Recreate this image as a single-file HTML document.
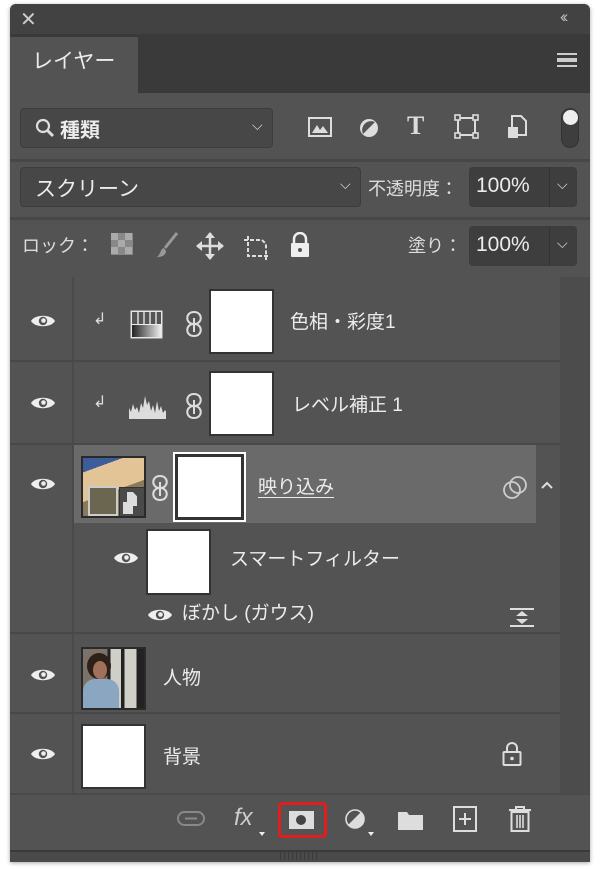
<!DOCTYPE html>
<html><head><meta charset="utf-8"><style>
*{margin:0;padding:0;box-sizing:border-box}
body{width:600px;height:876px;background:#fff;position:relative;overflow:hidden;font-family:"Liberation Sans","Noto Sans CJK JP",sans-serif;color:#e6e6e6}
.a{position:absolute}
.panel{left:10px;top:4px;width:580px;height:858px;background:#535353;border-radius:6px 6px 0 0;overflow:hidden;box-shadow:0 1px 4px rgba(0,0,0,.35)}
.box{position:absolute;background:#474747;border:1px solid #3c3c3c;border-radius:4px}
.t{position:absolute;white-space:nowrap;font-size:19px;color:#ececec}
.sep{position:absolute;left:0;width:550px;height:2px;background:#484848}
.wh{position:absolute;background:#fff;border:2px solid #333}
.eye{position:absolute;width:26px;height:16px}
</style></head><body>
<div class="a panel">
 <div class="a" style="left:0;top:0;width:580px;height:30px;background:#424242"></div>
 <div class="t" style="left:10px;top:3px;font-size:20px;color:#ccc">✕</div>
 <div class="t" style="left:550px;top:3px;font-size:17px;color:#bbb;letter-spacing:-3px">‹‹</div>
 <div class="a" style="left:0;top:30px;width:580px;height:59px;background:#3a3a3a"></div>
 <div class="a" style="left:0;top:33px;width:128px;height:56px;background:#535353"></div>
 <div class="t" style="left:22px;top:41px;font-size:21px">レイヤー</div>
 <div class="a" style="left:547px;top:49px;width:20px;height:14px;border-top:2px solid #ccc;border-bottom:2px solid #ccc"></div>
 <div class="a" style="left:547px;top:54px;width:20px;height:4px;border-top:2px solid #ccc;border-bottom:2px solid #ccc"></div>
 <div class="box" style="left:10px;top:104px;width:253px;height:40px"></div>
 <svg class="a" style="left:25px;top:114px" width="22" height="22"><circle cx="8" cy="8" r="6" fill="none" stroke="#ddd" stroke-width="2.2"/><path d="M12 12l6 6" stroke="#ddd" stroke-width="3"/></svg>
 <div class="t" style="left:50px;top:110px;font-size:20px;font-weight:bold">種類</div>
 <div class="t" style="left:242px;top:113px;font-size:14px;color:#ddd">⌵</div>
 <svg class="a" style="left:298px;top:112px" width="26" height="24"><rect x="1" y="2" width="22" height="18" fill="none" stroke="#ddd" stroke-width="2"/><path d="M4 17l5-8 3 5 3-4 5 7z" fill="#ddd"/></svg>
 <svg class="a" style="left:348px;top:112px" width="24" height="24"><circle cx="11" cy="12" r="9" fill="#ddd"/><path d="M17 6A9 9 0 0 1 5 18z" fill="#535353" transform="rotate(180 11 12)"/></svg>
 <div class="t" style="left:397px;top:107px;font-size:26px;font-family:'Liberation Serif',serif;font-weight:bold;color:#ddd">T</div>
 <svg class="a" style="left:444px;top:110px" width="26" height="26"><rect x="4" y="4" width="17" height="17" fill="none" stroke="#ddd" stroke-width="2"/><g fill="#535353" stroke="#ddd" stroke-width="1.6"><rect x="1" y="1" width="5" height="5"/><rect x="19" y="1" width="5" height="5"/><rect x="1" y="19" width="5" height="5"/><rect x="19" y="19" width="5" height="5"/></g></svg>
 <svg class="a" style="left:495px;top:110px" width="24" height="26"><path d="M7 2h9l5 5v14h-14z" fill="none" stroke="#ddd" stroke-width="2"/><rect x="3" y="13" width="10" height="11" fill="#ddd"/></svg>
 <div class="a" style="left:551px;top:104px;width:18px;height:40px;border-radius:9px;background:#3e3e3e;border:1px solid #333"></div>
 <div class="a" style="left:553px;top:106px;width:15px;height:15px;border-radius:50%;background:#eee"></div>
 <div class="a" style="left:0;top:155px;width:580px;height:3px;background:#474747"></div>
 <div class="box" style="left:10px;top:163px;width:341px;height:40px"></div>
 <div class="t" style="left:25px;top:169px;font-size:21px">スクリーン</div>
 <div class="t" style="left:330px;top:172px;font-size:14px;color:#ddd">⌵</div>
 <div class="t" style="left:358px;top:171px;font-size:18px;color:#ddd">不透明度：</div>
 <div class="box" style="left:459px;top:163px;width:108px;height:40px;background:#3e3e3e"></div>
 <div class="a" style="left:539px;top:163px;width:1px;height:40px;background:#333"></div>
 <div class="t" style="left:466px;top:170px;font-size:21px">100%</div>
 <div class="t" style="left:547px;top:172px;font-size:14px;color:#ddd">⌵</div>
 <div class="a" style="left:0;top:213px;width:580px;height:3px;background:#474747"></div>
 <div class="t" style="left:12px;top:228px;font-size:18px;color:#ddd">ロック：</div>
 <svg class="a" style="left:101px;top:229px" width="22" height="22"><rect width="22" height="22" fill="#888"/><g fill="#aaa"><rect x="0" y="0" width="7" height="7"/><rect x="14" y="0" width="7" height="7"/><rect x="7" y="7" width="7" height="7"/><rect x="0" y="14" width="7" height="7"/><rect x="14" y="14" width="7" height="7"/></g></svg>
 <svg class="a" style="left:145px;top:227px" width="26" height="28"><path d="M22 2L10 17" stroke="#999" stroke-width="3"/><path d="M9 17c-4 1-3 6-7 9 5 0 9-2 9-6z" fill="#999"/></svg>
 <svg class="a" style="left:186px;top:228px" width="28" height="28"><path d="M14 1v26M1 14h26" stroke="#ddd" stroke-width="2.5"/><path d="M14 0l-5 6h10zM14 28l-5-6h10zM0 14l6-5v10zM28 14l-6-5v10z" fill="#ddd"/></svg>
 <svg class="a" style="left:232px;top:228px" width="30" height="28"><path d="M6 4v20h20M2 8h18l4 4v16" fill="none" stroke="#ddd" stroke-width="2" stroke-dasharray="4 2"/></svg>
 <svg class="a" style="left:279px;top:228px" width="22" height="26"><path d="M5 11V7a6 6 0 0 1 12 0v4" fill="none" stroke="#eee" stroke-width="2.5"/><rect x="2" y="11" width="18" height="14" rx="1" fill="#eee"/><circle cx="11" cy="18" r="2" fill="#535353"/></svg>
 <div class="t" style="left:398px;top:228px;font-size:18px;color:#ddd">塗り：</div>
 <div class="box" style="left:459px;top:222px;width:108px;height:40px;background:#3e3e3e"></div>
 <div class="a" style="left:539px;top:222px;width:1px;height:40px;background:#333"></div>
 <div class="t" style="left:466px;top:229px;font-size:21px">100%</div>
 <div class="t" style="left:547px;top:231px;font-size:14px;color:#ddd">⌵</div>
 <div class="a" style="left:0;top:273px;width:580px;height:518px;background:#535353"></div>
 <div class="a" style="left:550px;top:273px;width:30px;height:518px;background:#4c4c4c"></div>
 <div class="a" style="left:62px;top:273px;width:2px;height:518px;background:#4a4a4a"></div>
 <div class="sep" style="top:356px"></div>
 <div class="sep" style="top:439px"></div>
 <div class="a" style="left:64px;top:441px;width:462px;height:78px;background:#6a6a6a"></div>
 <div class="sep" style="top:628px"></div>
 <div class="sep" style="top:708px"></div>
 <div class="sep" style="top:789px;width:580px;background:#4a4a4a"></div>
 <svg width="0" height="0" style="position:absolute"><defs><g id="e"><path d="M1 8C5 1 21 1 25 8C21 15 5 15 1 8z" fill="#eee"/><circle cx="13" cy="8" r="4.2" fill="#535353"/><circle cx="13.5" cy="7.5" r="2.3" fill="#eee"/></g></defs></svg>
 <svg class="eye" style="left:20px;top:309px"><use href="#e"/></svg>
 <svg class="eye" style="left:20px;top:391px"><use href="#e"/></svg>
 <svg class="eye" style="left:20px;top:472px"><use href="#e"/></svg>
 <svg class="eye" style="left:103px;top:546px"><use href="#e"/></svg>
 <svg class="eye" style="left:137px;top:603px"><use href="#e"/></svg>
 <svg class="eye" style="left:20px;top:663px"><use href="#e"/></svg>
 <svg class="eye" style="left:20px;top:742px"><use href="#e"/></svg>
 <div class="t" style="left:83px;top:305px;font-size:16px;color:#ddd">↲</div>
 <svg class="a" style="left:120px;top:306px" width="34" height="30"><defs><linearGradient id="g" x1="0" x2="1"><stop offset="0" stop-color="#222"/><stop offset="1" stop-color="#eee"/></linearGradient></defs><rect x="1" y="1" width="31" height="27" fill="#eee" stroke="#ddd"/><rect x="2" y="2" width="29" height="12" fill="#555"/><g stroke="#ddd" stroke-width="1.5"><path d="M8 2v12M14 2v12M20 2v12M26 2v12"/></g><rect x="2" y="15" width="29" height="12" fill="url(#g)"/></svg>
 <svg class="a" style="left:176px;top:306px" width="16" height="30"><path d="M8 2c-9 0-9 12 0 12c9 0 9 12 0 12M8 2c9 0 9 12 0 12c-9 0-9 12 0 12" fill="none" stroke="#ddd" stroke-width="2"/><path d="M8 8v14" stroke="#ddd" stroke-width="2"/></svg>
 <div class="wh" style="left:199px;top:285px;width:65px;height:65px"></div>
 <div class="t" style="left:280px;top:303px">色相・彩度1</div>
 <div class="t" style="left:83px;top:388px;font-size:16px;color:#ddd">↲</div>
 <svg class="a" style="left:118px;top:390px" width="38" height="26"><path d="M1 25V14l2 4 2-8 2 6 2-3 2 6 2-10 2 5 2-12 2 9 2-4 2 10 2-6 2 8 2-12 2 10 2-5 2 7 2-3 2 3v6z" fill="#ddd"/></svg>
 <svg class="a" style="left:176px;top:388px" width="16" height="30"><path d="M8 2c-9 0-9 12 0 12c9 0 9 12 0 12M8 2c9 0 9 12 0 12c-9 0-9 12 0 12" fill="none" stroke="#ddd" stroke-width="2"/><path d="M8 8v14" stroke="#ddd" stroke-width="2"/></svg>
 <div class="wh" style="left:199px;top:367px;width:65px;height:65px"></div>
 <div class="t" style="left:282px;top:386px">レベル補正 1</div>
 <div class="a" style="left:71px;top:452px;width:65px;height:62px;border:2px solid #2a2a2a;overflow:hidden;background:linear-gradient(160deg,#3d5d9a 0 18%,#e2c497 18% 55%,#8a7a5a 55%)">
  <div class="a" style="left:5px;top:28px;width:30px;height:30px;background:#6b6650;border:2px solid #ccc"></div>
  <div class="a" style="left:36px;top:29px;width:28px;height:30px;background:#4a4a4a;border:1px solid #333"></div>
  <div class="a" style="left:44px;top:34px;width:10px;height:14px;background:#ddd;clip-path:polygon(0 0,60% 0,100% 30%,100% 100%,0 100%)"></div>
  <div class="a" style="left:40px;top:44px;width:10px;height:12px;background:#ddd"></div>
 </div>
 <svg class="a" style="left:142px;top:470px" width="16" height="30"><path d="M8 2c-9 0-9 12 0 12c9 0 9 12 0 12M8 2c9 0 9 12 0 12c-9 0-9 12 0 12" fill="none" stroke="#ddd" stroke-width="2"/><path d="M8 8v14" stroke="#ddd" stroke-width="2"/></svg>
 <div class="a" style="left:163px;top:448px;width:73px;height:70px;background:#fff;border:2px solid #fff"><div style="width:100%;height:100%;border:3px solid #333;background:#fff"></div></div>
 <div class="t" style="left:248px;top:468px;text-decoration:underline;text-underline-offset:4px">映り込み</div>
 <svg class="a" style="left:493px;top:471px" width="26" height="26"><circle cx="9" cy="15" r="8" fill="none" stroke="#ccc" stroke-width="1.8"/><circle cx="15" cy="10" r="8" fill="none" stroke="#ccc" stroke-width="1.8"/></svg>
 <svg class="a" style="left:530px;top:476px" width="14" height="10"><path d="M2 8l5-5 5 5" fill="none" stroke="#ddd" stroke-width="2"/></svg>
 <div class="wh" style="left:136px;top:525px;width:65px;height:66px"></div>
 <div class="t" style="left:220px;top:540px">スマートフィルター</div>
 <div class="t" style="left:172px;top:594px">ぼかし (ガウス)</div>
 <svg class="a" style="left:500px;top:603px" width="24" height="22"><path d="M0 2h24M0 19h24" stroke="#ddd" stroke-width="2"/><path d="M12 4l-6 5h12zM12 17l-6-5h12z" fill="#ddd"/></svg>
 <div class="a" style="left:71px;top:643px;width:65px;height:63px;border:2px solid #2a2a2a;overflow:hidden;background:linear-gradient(90deg,#7c7268 0 40%,#222 40% 45%,#cfcfc8 45% 62%,#222 62% 68%,#d0d0c8 68% 88%,#222 88%)">
  <div class="a" style="left:4px;top:4px;width:24px;height:26px;border-radius:50%;background:#2c2018"></div>
  <div class="a" style="left:10px;top:12px;width:14px;height:18px;border-radius:50%;background:#a0705a"></div>
  <div class="a" style="left:0;top:30px;width:36px;height:34px;border-radius:12px 12px 0 0;background:#8aa6c0"></div>
 </div>
 <div class="t" style="left:153px;top:659px">人物</div>
 <div class="wh" style="left:71px;top:720px;width:65px;height:65px"></div>
 <div class="t" style="left:153px;top:738px">背景</div>
 <svg class="a" style="left:492px;top:737px" width="20" height="26"><path d="M5 11V7a5 5 0 0 1 10 0v4" fill="none" stroke="#ddd" stroke-width="2"/><rect x="1.5" y="11" width="17" height="13" rx="1" fill="none" stroke="#ddd" stroke-width="2"/><circle cx="10" cy="17.5" r="1.8" fill="#ddd"/></svg>
 <div class="a" style="left:0;top:791px;width:580px;height:55px;background:#535353"></div>
 <svg class="a" style="left:166px;top:805px" width="30" height="20"><rect x="2" y="3" width="26" height="13" rx="6.5" fill="none" stroke="#888" stroke-width="2"/><path d="M9 9.5h12" stroke="#888" stroke-width="2"/></svg>
 <div class="t" style="left:224px;top:800px;font-size:24px;font-style:italic;color:#ccc;font-family:'Liberation Sans',sans-serif">fx</div>
 <div class="a" style="left:249px;top:828px;border:3px solid transparent;border-top:4px solid #eee"></div>
 <div class="a" style="left:268px;top:798px;width:49px;height:36px;border:3px solid #e21d1d;border-radius:4px"></div>
 <div class="a" style="left:279px;top:807px;width:25px;height:18px;background:#ddd"><div class="a" style="left:7px;top:4px;width:10px;height:10px;border-radius:50%;background:#444"></div></div>
 <svg class="a" style="left:334px;top:804px" width="24" height="24"><circle cx="11" cy="11" r="9" fill="#ddd"/><path d="M4 17L17 4A9 9 0 0 0 4 17z" fill="#535353"/><circle cx="11" cy="11" r="9" fill="none" stroke="#ddd" stroke-width="1.6"/></svg>
 <div class="a" style="left:358px;top:828px;border:3px solid transparent;border-top:4px solid #eee"></div>
 <svg class="a" style="left:387px;top:805px" width="28" height="22"><path d="M1 3h9l2 3h14v15H1z" fill="#ddd"/></svg>
 <svg class="a" style="left:443px;top:802px" width="24" height="26"><rect x="1" y="1" width="22" height="24" fill="none" stroke="#ddd" stroke-width="2"/><path d="M12 7v12M6 13h12" stroke="#ddd" stroke-width="2"/></svg>
 <svg class="a" style="left:498px;top:802px" width="24" height="26"><path d="M1 4h22M8 4V1h8v3" fill="none" stroke="#ddd" stroke-width="2"/><rect x="3.5" y="6" width="17" height="19" fill="none" stroke="#ddd" stroke-width="2"/><path d="M9 9v13M12 9v13M15 9v13" stroke="#ddd" stroke-width="1.6"/></svg>
 <div class="a" style="left:0;top:846px;width:580px;height:12px;background:#4a4a4a;border-top:2px solid #3a3a3a"></div>
 <div class="a" style="left:270px;top:848px;width:38px;height:8px;background:repeating-linear-gradient(90deg,#3a3a3a 0 1px,transparent 1px 4px)"></div>
</div>
</body></html>
